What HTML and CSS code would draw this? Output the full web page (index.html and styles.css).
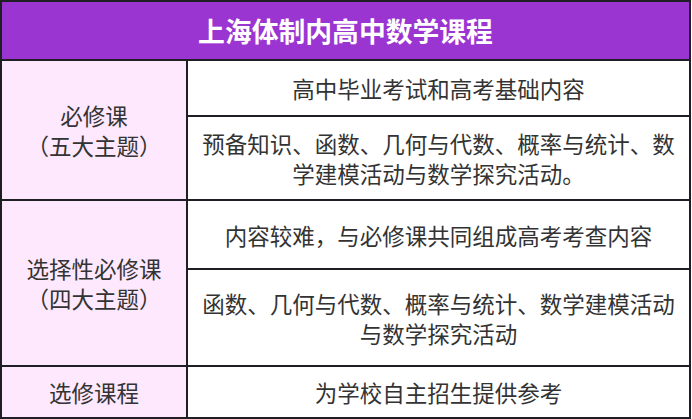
FILE: index.html
```html
<!DOCTYPE html>
<html lang="zh-CN">
<head>
<meta charset="utf-8">
<link rel="stylesheet" href="styles.css">
</head>
<body>
<table class="course">
  <colgroup><col class="c1"><col class="c2"></colgroup>
  <tr class="head"><th colspan="2">上海体制内高中数学课程</th></tr>
  <tr class="r1"><td rowspan="2" class="cat">必修课<br>（五大主题）</td><td>高中毕业考试和高考基础内容</td></tr>
  <tr class="r2"><td>预备知识、函数、几何与代数、概率与统计、数<br>学建模活动与数学探究活动。</td></tr>
  <tr class="r3"><td rowspan="2" class="cat">选择性必修课<br>（四大主题）</td><td>内容较难，与必修课共同组成高考考查内容</td></tr>
  <tr class="r4"><td>函数、几何与代数、概率与统计、数学建模活动<br>与数学探究活动</td></tr>
  <tr class="r5"><td class="cat">选修课程</td><td>为学校自主招生提供参考</td></tr>
</table>
</body>
</html>
```
FILE: styles.css
```css
html, body { margin: 0; padding: 0; background: #fff; }
body { font-family: "Noto Sans CJK SC", "Noto Sans", sans-serif; }
.course {
  border-collapse: collapse;
  width: 691px;
  table-layout: fixed;
  color: #333;
}
.c1 { width: 186px; }
.course th, .course td {
  border: 2px solid #1e1e24;
  padding: 0;
  text-align: center;
  vertical-align: middle;
  font-size: 22.5px;
  line-height: 30px;
}
.head th {
  background: #9b35d1;
  color: #fff;
  font-size: 26.8px;
  font-weight: 700;
  height: 57px;
}
.cat { background: #fde8fd; }
.r1 td { height: 54px; }
.r2 td { height: 82px; }
.r3 td { height: 67px; }
.r4 td { height: 95px; }
.r5 td { height: 50px; }
```
